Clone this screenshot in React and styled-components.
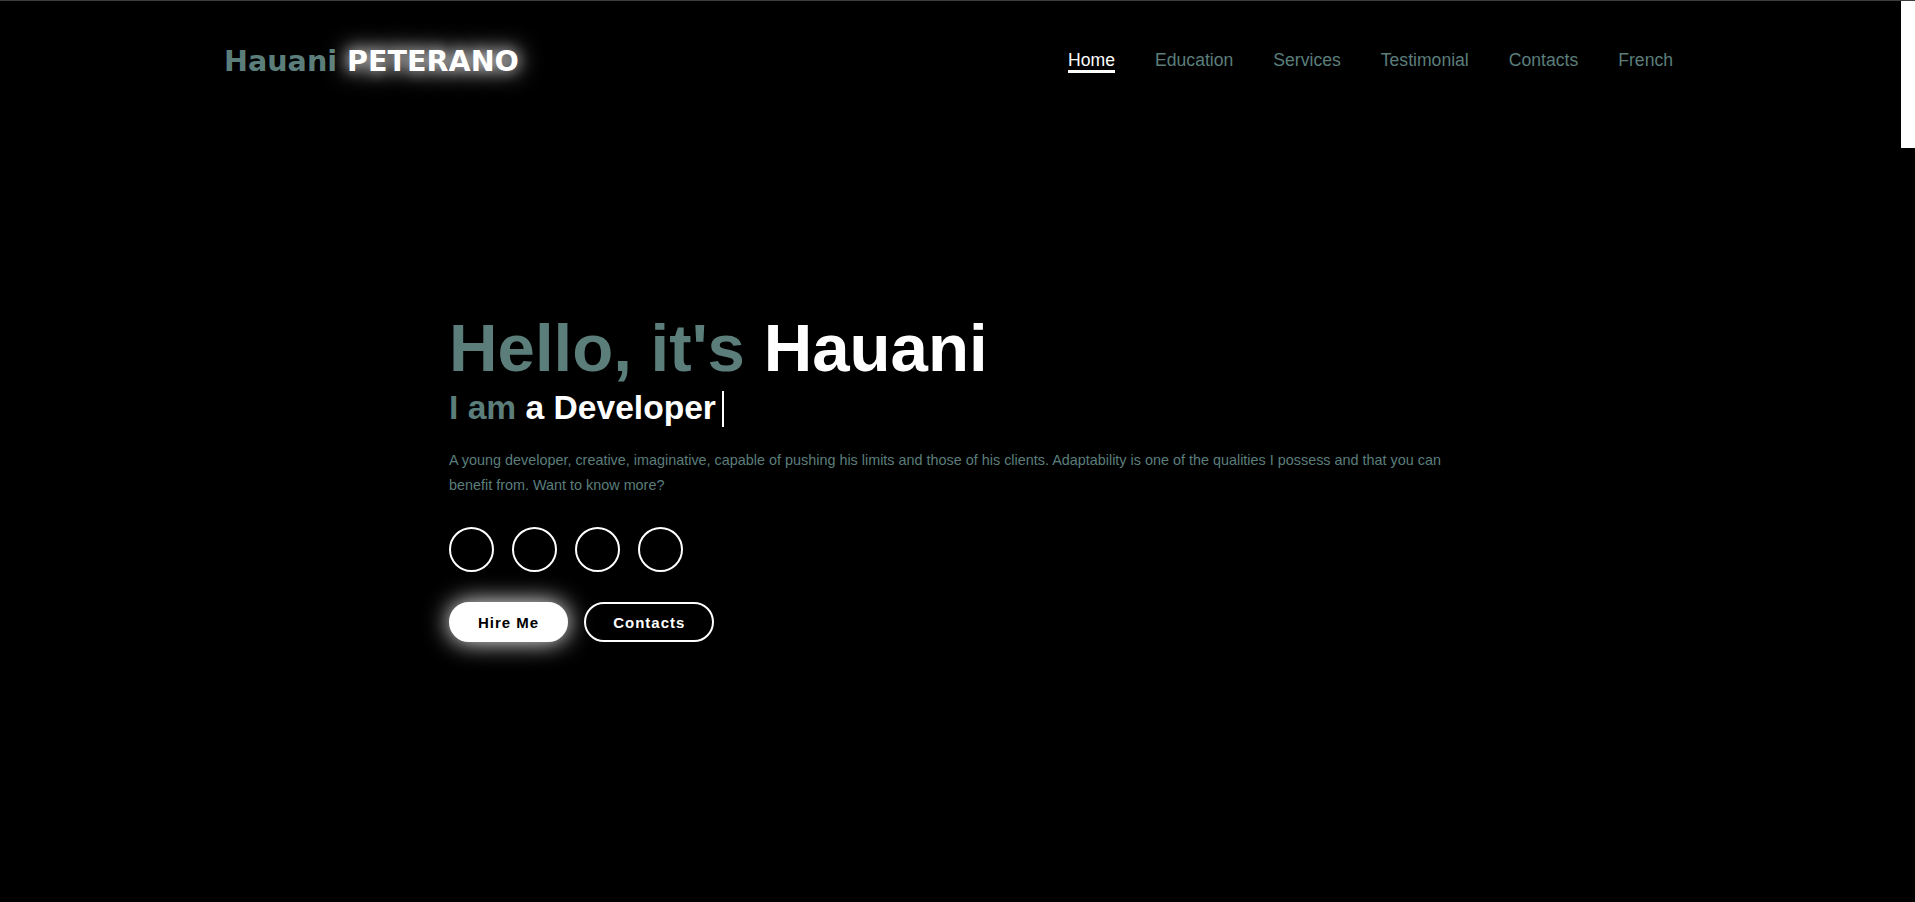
import React from "react";
import styled, { createGlobalStyle } from "styled-components";

const TEAL = "#5b7e7b";

const GlobalStyle = createGlobalStyle`
  *, *::before, *::after { box-sizing: border-box; }
  html, body {
    margin: 0;
    height: 100%;
    overflow: hidden;
    background: #000;
  }
  body {
    border-top: 1px solid #3c3c3c;
    font-family: "Liberation Sans", Arial, sans-serif;
    color: #fff;
  }
  #root {
    height: 100%;
    background: #000;
  }
`;

const Frame = styled.div`
  display: flex;
  height: 100%;
`;

const Page = styled.main`
  flex: 1;
  min-width: 0;
  overflow: hidden;
`;

const ScrollTrack = styled.div`
  width: 14px;
  flex-shrink: 0;
  background: #000;
`;

const ScrollThumb = styled.div`
  height: 147px;
  background: #fff;
`;

const Header = styled.header`
  height: 120px;
  display: flex;
  align-items: center;
  justify-content: space-between;
  padding: 0 228px 0 224px;
`;

const Logo = styled.a`
  font-family: "DejaVu Sans", "Liberation Sans", sans-serif;
  font-weight: 700;
  font-size: 28.6px;
  color: ${TEAL};
  text-decoration: none;
  white-space: nowrap;
`;

const LogoStrong = styled.span`
  color: #fff;
  text-shadow: 0 0 25px #fff, 0 0 14px rgba(255, 255, 255, 0.7);
`;

const Nav = styled.nav`
  display: flex;
  align-items: center;
  gap: 40px;
  padding-top: 0;
`;

const NavLink = styled.a`
  position: relative;
  display: inline-block;
  font-size: 17.6px;
  line-height: 17.6px;
  color: ${(p) => (p.$active ? "#fff" : TEAL)};
  text-decoration: none;

  &::after {
    content: "";
    position: absolute;
    left: 0;
    right: 0;
    top: 18px;
    height: 3px;
    background: ${(p) => (p.$active ? "#fff" : "transparent")};
  }
`;

const Hero = styled.section`
  padding: 186px 0 0 449px;
`;

const Content = styled.div`
  width: 1005px;
  display: flex;
  flex-direction: column;
  align-items: flex-start;
`;

const Title = styled.h1`
  margin: 0;
  font-size: 67.2px;
  line-height: 81px;
  font-weight: 700;
  color: ${TEAL};
  white-space: nowrap;
`;

const White = styled.span`
  color: #fff;
`;

const Sub = styled.h3`
  margin: 0;
  font-size: 33.6px;
  line-height: 40px;
  font-weight: 700;
  color: ${TEAL};
  white-space: nowrap;
`;

const Cursor = styled.span`
  display: inline-block;
  width: 2px;
  height: 36px;
  background: #fff;
  margin-left: 6px;
  vertical-align: -8px;
`;

const Text = styled.p`
  margin: 20px 0 0;
  font-size: 14.4px;
  line-height: 25px;
  color: ${TEAL};
`;

const Socials = styled.div`
  display: flex;
  gap: 18px;
  margin-top: 29px;
`;

const SocialLink = styled.a`
  width: 45px;
  height: 45px;
  border: 2px solid #fff;
  border-radius: 50%;
  display: inline-flex;
  align-items: center;
  justify-content: center;
`;

const Buttons = styled.div`
  display: flex;
  gap: 16px;
  margin-top: 30px;
`;

const Button = styled.a`
  height: 40px;
  padding: 0 27px;
  display: inline-flex;
  align-items: center;
  border-radius: 40px;
  border: 2px solid #fff;
  font-size: 15px;
  font-weight: 700;
  letter-spacing: 1px;
  text-decoration: none;
  color: ${(p) => (p.$filled ? "#000" : "#fff")};
  background: ${(p) => (p.$filled ? "#fff" : "transparent")};
  box-shadow: ${(p) => (p.$filled ? "0 0 25px #fff" : "none")};
`;

const navItems = ["Home", "Education", "Services", "Testimonial", "Contacts", "French"];

export default function App() {
  return (
    <>
      <GlobalStyle />
      <Frame>
        <Page>
          <Header>
            <Logo href="#">
              Hauani <LogoStrong>PETERANO</LogoStrong>
            </Logo>
            <Nav>
              {navItems.map((item, i) => (
                <NavLink key={item} href="#" $active={i === 0}>
                  {item}
                </NavLink>
              ))}
            </Nav>
          </Header>
          <Hero>
            <Content>
              <Title>
                Hello, it's <White>Hauani</White>
              </Title>
              <Sub>
                I am <White>a Developer</White>
                <Cursor />
              </Sub>
              <Text>
                A young developer, creative, imaginative, capable of pushing his limits and those of
                his clients. Adaptability is one of the qualities I possess and that you can benefit
                from. Want to know more?
              </Text>
              <Socials>
                <SocialLink href="#" aria-label="Facebook" />
                <SocialLink href="#" aria-label="Instagram" />
                <SocialLink href="#" aria-label="LinkedIn" />
                <SocialLink href="#" aria-label="GitHub" />
              </Socials>
              <Buttons>
                <Button href="#" $filled>
                  Hire Me
                </Button>
                <Button href="#">Contacts</Button>
              </Buttons>
            </Content>
          </Hero>
        </Page>
        <ScrollTrack aria-hidden="true">
          <ScrollThumb />
        </ScrollTrack>
      </Frame>
    </>
  );
}
